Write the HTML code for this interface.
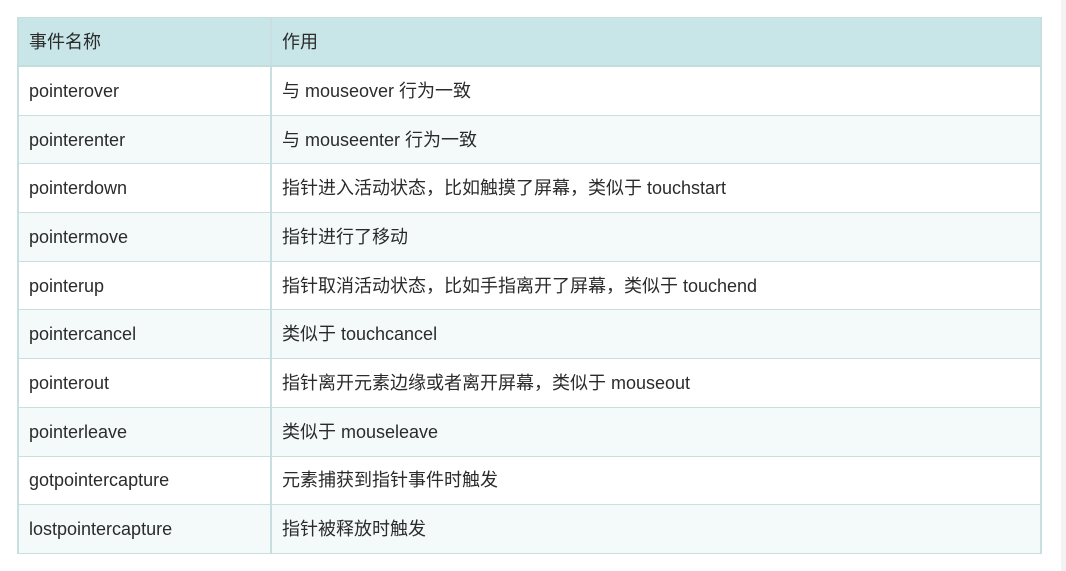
<!DOCTYPE html>
<html><head><meta charset="utf-8"><style>
html,body{margin:0;padding:0;background:#fff;width:1066px;height:571px;overflow:hidden;font-family:"Liberation Sans","Noto Sans CJK SC",sans-serif;}
.sb{position:absolute;left:1061px;top:0;width:5px;height:571px;background:#f3f3f3;}
table{position:absolute;left:17px;top:17px;width:1025px;border-collapse:collapse;font-size:18px;color:#2b2b2b;}
td,th{border:2px solid #c9dfdf;border-top-width:1px;border-bottom-width:1px;padding:0 0 0 10px;height:47.7px;line-height:24px;text-align:left;font-weight:normal;vertical-align:middle;}
th{background:#c8e6e8;height:47px;border-bottom:2px solid #c3dcdc;}
tr:nth-child(odd) td{background:#f4fafa;}
td:first-child,th:first-child{width:241px;}
</style></head><body>
<table>
<tr><th>事件名称</th><th>作用</th></tr>
<tr><td>pointerover</td><td>与 mouseover 行为一致</td></tr>
<tr><td>pointerenter</td><td>与 mouseenter 行为一致</td></tr>
<tr><td>pointerdown</td><td>指针进入活动状态，比如触摸了屏幕，类似于 touchstart</td></tr>
<tr><td>pointermove</td><td>指针进行了移动</td></tr>
<tr><td>pointerup</td><td>指针取消活动状态，比如手指离开了屏幕，类似于 touchend</td></tr>
<tr><td>pointercancel</td><td>类似于 touchcancel</td></tr>
<tr><td>pointerout</td><td>指针离开元素边缘或者离开屏幕，类似于 mouseout</td></tr>
<tr><td>pointerleave</td><td>类似于 mouseleave</td></tr>
<tr><td>gotpointercapture</td><td>元素捕获到指针事件时触发</td></tr>
<tr><td>lostpointercapture</td><td>指针被释放时触发</td></tr>
</table>
<div class="sb"></div>
</body></html>
